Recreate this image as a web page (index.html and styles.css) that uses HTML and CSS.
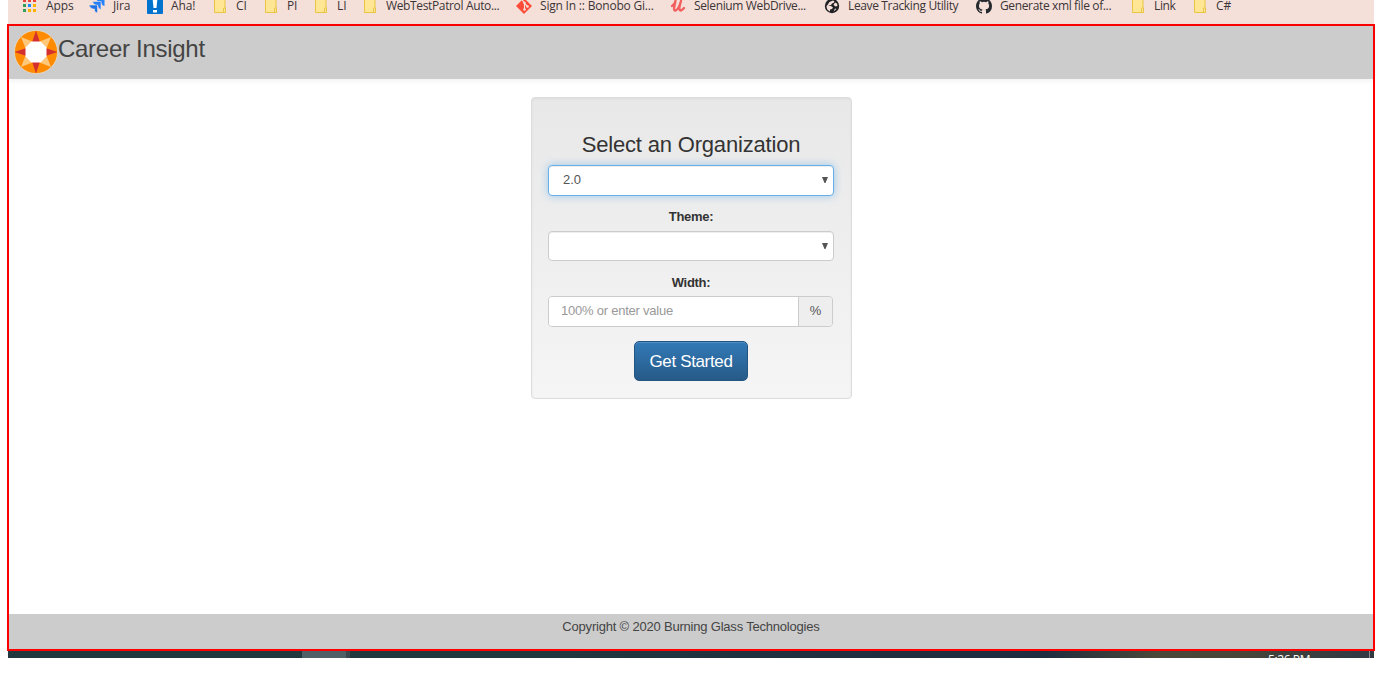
FILE: index.html
```html
<!DOCTYPE html>
<html lang="en">
<head>
<meta charset="utf-8">
<title>Career Insight</title>
<link rel="stylesheet" href="styles.css">
</head>
<body>
<svg class="defs" width="0" height="0">
  <symbol id="folder" viewBox="0 0 16 16"><path d="M2.500-1v15.500h11v-4.500h-.500v-11z" fill="#ffe694" stroke="#e8c544"/><path d="M11.500 14.500v-3.500q0-1 1-1t1 1v3.500z" fill="#ffe694" stroke="#e8c544"/></symbol>
</svg>
<nav class="bookmarks">
  <a class="bookmark"><svg class="icon" viewBox="0 0 16 16"><path d="M1 1h3v3H1z" fill="#e94335"/><path d="M6 1h3v3H6z" fill="#e94335"/><path d="M11 1h3v3h-3z" fill="#e94335"/><path d="M1 6h3v3H1zM1 11h3v3H1z" fill="#34a056"/><path d="M6 6h3v3H6z" fill="#1a8cff"/><path d="M11 6h3v3h-3zM6 11h3v3H6zM11 11h3v3h-3z" fill="#fbb400"/></svg><span class="text">Apps</span></a>
  <a class="bookmark"><svg class="icon" viewBox="0 0 16 16"><path d="M7 0h8.500v8q-2.500-.500-3-2.500V4.500h-1.500Q8 4 7 0z" fill="#2684ff"/><path d="M3.500 3.500H12v8q-2.500-.500-3-2.500V7.500H7.500Q4.500 7 3.500 3.500z" fill="#2480fa" stroke="#f5e0d9" stroke-width=".600"/><path d="M0 7h8.500v8q-2.500-.500-3-2.500V11H4Q1 10.500 0 7z" fill="#1e73e8" stroke="#f5e0d9" stroke-width=".600"/></svg><span class="text">Jira</span></a>
  <a class="bookmark"><svg class="icon" viewBox="0 0 16 16"><path d="M0 0h16v15q0 1-1 1H1q-1 0-1-1z" fill="#0073cf"/><path d="M5.500 0h5l-1 10h-3zM6 12h4v2.500H6z" fill="#fff"/></svg><span class="text">Aha!</span></a>
  <a class="bookmark"><svg class="icon"><use href="#folder"/></svg><span class="text">CI</span></a>
  <a class="bookmark"><svg class="icon"><use href="#folder"/></svg><span class="text">PI</span></a>
  <a class="bookmark"><svg class="icon"><use href="#folder"/></svg><span class="text">LI</span></a>
  <a class="bookmark"><svg class="icon"><use href="#folder"/></svg><span class="text tight">WebTestPatrol Auto...</span></a>
  <a class="bookmark"><svg class="icon" viewBox="0 0 16 16"><path d="M8 0l8 8-8 8-8-8z" fill="#fc4c37"/><path d="M6 2l2.500 2.500v7M8.500 5.500L11.500 8.500" fill="none" stroke="#f5e0d9" stroke-width="1.100"/><circle cx="8.500" cy="5" r="1.300" fill="#f5e0d9"/><circle cx="8.500" cy="11.500" r="1.300" fill="#f5e0d9"/><circle cx="11.500" cy="8.500" r="1.300" fill="#f5e0d9"/></svg><span class="text sign">Sign In :: Bonobo Gi...</span></a>
  <a class="bookmark"><svg class="icon" viewBox="0 0 16 16"><path d="M2 8Q5 6 5.500 3Q4.500 8 4 10.500Q4 12.800 5.700 12.500Q8.700 11 11 3Q9 10 9.500 11.500Q10.500 14 14 10" fill="none" stroke="#f25f5f" stroke-width="2.300" stroke-linecap="round" stroke-linejoin="round"/></svg><span class="text tight">Selenium WebDrive...</span></a>
  <a class="bookmark"><svg class="icon" viewBox="0 0 16 16"><circle cx="8" cy="8" r="7.200" fill="#202124"/><path d="M9 2.500q2 .500 1 2L8 5.500 7 7 4 7.500q3.500 0 5 2l-1 1.500-2 .500v2Q2.500 12 2.500 8l1-1 2-3zM11 4.500l2 1 .500 2.500-2 .500-2-1.500zM11 10.500l1.500.500-3 2.500z" fill="#f5e0d9"/></svg><span class="text tight">Leave Tracking Utility</span></a>
  <a class="bookmark"><svg class="icon" viewBox="0 0 16 16"><path d="M8 0C3.580 0 0 3.580 0 8c0 3.540 2.290 6.530 5.470 7.590.400.070.550-.170.550-.380v-1.490c-2.230.480-2.690-.950-2.690-.950-.360-.930-.890-1.170-.890-1.170-.730-.500.050-.490.050-.490.810.060 1.230.830 1.230.830.720 1.230 1.880.870 2.340.670.070-.520.280-.870.510-1.070-1.780-.200-3.650-.890-3.650-3.950 0-.870.310-1.590.820-2.150-.080-.200-.360-1.020.080-2.120 0 0 .670-.210 2.200.820a7.600 7.600 0 0 1 4 0c1.530-1.040 2.200-.820 2.200-.820.440 1.100.160 1.920.080 2.120.510.560.820 1.270.820 2.150 0 3.070-1.870 3.750-3.650 3.950.290.250.540.730.540 1.480v2.200c0 .210.150.460.550.380A8 8 0 0 0 16 8c0-4.420-3.580-8-8-8z" fill="#24292e"/></svg><span class="text tight">Generate xml file of...</span></a>
  <a class="bookmark"><svg class="icon"><use href="#folder"/></svg><span class="text tight">Link</span></a>
  <a class="bookmark"><svg class="icon"><use href="#folder"/></svg><span class="text">C#</span></a>
</nav>
<div class="frame">
  <header class="header">
    <svg class="logo" viewBox="-22 -22 44 44"><circle r="21.600" fill="#ff8c00" stroke="#e5ddd0" stroke-width=".800"/><path d="M-15-15L0-9 15-15 9 0 15 15 0 9-15 15-9 0z" fill="#ffc77a"/><path d="M0-21.500L4.500-8 8-4.500 21.500 0 8 4.500 4.500 8 0 21.500-4.500 8-8 4.500-21.500 0-8-4.500-4.500-8z" fill="#d32f2f"/><path d="M-4.500-10.500h9l6 6v9l-6 6h-9l-6-6v-9z" fill="#fff"/></svg>
    <span class="brand">Career Insight</span>
  </header>
  <main class="content">
    <form class="panel">
      <h1 class="title">Select an Organization</h1>
      <div class="select focused"><span class="value">2.0</span><svg class="arrow" viewBox="0 0 6 6"><path d="M0 0h6L3.500 6h-1z"/></svg></div>
      <label class="label">Theme:</label>
      <div class="select"><span class="value"></span><svg class="arrow" viewBox="0 0 6 6"><path d="M0 0h6L3.500 6h-1z"/></svg></div>
      <label class="label width-label">Width:</label>
      <div class="group"><div class="field">100% or enter value</div><div class="addon">%</div></div>
      <div class="button">Get Started</div>
    </form>
  </main>
  <footer class="footer">Copyright © 2020 Burning Glass Technologies</footer>
</div>
<div class="taskbar"><span class="task"></span><span class="task-edge"></span><span class="clock">5:26 PM</span><span class="peek"></span></div>
</body>
</html>
```
FILE: styles.css
```css
* { box-sizing: border-box; }
body { margin: 0; width: 1382px; height: 675px; overflow: hidden; background: #fff; font-family: "Liberation Sans", Arial, sans-serif; font-size: 13px; color: #333; }
.defs { display: block; }
.bookmarks { margin-left: 8px; width: 1366px; height: 24px; padding-left: 14px; overflow: hidden; background: #f5e0d9; display: grid; grid-template-columns: 67px 58px 65px 51px 50px 49px 154px 154px 154px 152px 154px 62px 100px; font: 12px/12px "Open Sans", "Noto Sans", sans-serif; color: #3b3538; }
.bookmark { display: flex; gap: 8px; height: 16px; white-space: nowrap; }
.icon { width: 16px; height: 16px; flex: none; margin-top: -2px; }
.text { letter-spacing: -.1px; }
.text.tight { letter-spacing: -.36px; }
.text.sign { letter-spacing: -.2px; }
.frame { margin-left: 7px; width: 1368px; height: 627px; border: 2px solid #f00; display: flex; flex-direction: column; }
.header { height: 53px; background: #ccc; display: flex; padding: 4px 0 0 4.5px; box-shadow: 0 1px 6px rgba(0,0,0,.08); }
.logo { width: 44px; height: 44px; flex: none; }
.brand { font-size: 24px; line-height: 28px; padding: 5px 0 0 .5px; color: #444; letter-spacing: -.28px; }
.content { flex: 1; display: flex; justify-content: center; align-items: flex-start; padding-top: 18px; }
.panel { width: 321px; height: 302px; margin-left: 1px; border: 1px solid #dcdcdc; border-radius: 4px; padding: 33px 17px 0 16px; background: linear-gradient(#e8e8e8, #f5f5f5); box-shadow: inset 0 1px 3px rgba(0,0,0,.05); }
.title { margin: 0 0 6px; font-size: 22px; line-height: 28px; font-weight: 400; text-align: center; letter-spacing: -.18px; }
.select { height: 30px; display: flex; justify-content: space-between; align-items: center; padding: 0 5px 1px 14px; border: 1px solid #ccc; border-radius: 4px; background: #fff; box-shadow: inset 0 1px 1px rgba(0,0,0,.075); color: #555; font-size: 13px; }
.value { padding-bottom: 1px; }
.select.focused { height: 31px; border-color: #66afe9; box-shadow: inset 0 1px 1px rgba(0,0,0,.075), 0 0 8px rgba(102,175,233,.6); }
.arrow { width: 6px; height: 6px; fill: #555; }
.label { display: block; height: 35px; padding-top: 11px; line-height: 20px; text-align: center; font-weight: 700; letter-spacing: -.3px; }
.width-label { padding-top: 12px; }
.group { display: flex; width: 285px; height: 31px; border: 1px solid #ccc; border-radius: 4px; overflow: hidden; line-height: 27px; }
.field { flex: 1; background: #fff; padding-left: 12px; color: #999; letter-spacing: -.23px; }
.addon { width: 34px; border-left: 1px solid #ccc; background: #eee; color: #555; text-align: center; }
.button { width: 114px; height: 40px; margin: 14px auto 0; border: 1px solid #245580; border-radius: 5px; background: linear-gradient(#337ab7, #265a88); box-shadow: inset 0 1px 0 rgba(255,255,255,.15); color: #fff; text-align: center; font-size: 17px; line-height: 39px; white-space: nowrap; letter-spacing: -.36px; }
.footer { height: 35px; background: #ccc; text-align: center; line-height: 25px; font-size: 13px; letter-spacing: -.2px; color: #444; }
.taskbar { margin-left: 8px; width: 1366px; height: 7px; overflow: hidden; display: flex; padding-left: 294px; background: linear-gradient(90deg, #22383f 0, #22383f 38%, #20303f 58%, #1f2d40 76%, #494839 84%, #484638 90%, #333a44 99%); }
.task { width: 44px; background: #4f6066; }
.task-edge { width: 4px; background: #3c4850; }
.clock { margin-left: 918px; width: 93px; color: #fff; font: 12px/16px "Open Sans", sans-serif; padding-top: 1px; letter-spacing: -.4px; }
.peek { margin-left: 8px; width: 1px; background: #8a8c90; }
```
